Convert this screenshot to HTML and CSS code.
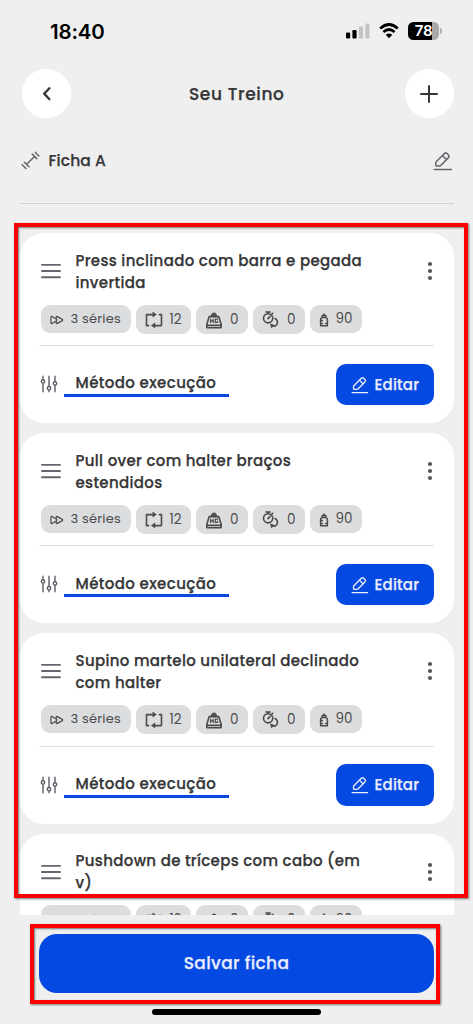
FILE: index.html
```html
<!DOCTYPE html>
<html lang="pt-BR">
<head>
<meta charset="utf-8">
<title>Seu Treino</title>
<link rel="stylesheet" href="styles.css">
</head>
<body>
<svg class="sprite" aria-hidden="true">
  <symbol id="edit" viewBox="0 0 20 20"><path d="M3.2 10.8 11.4 2.5Q12.7 1.2 14 2.5L15.5 4Q16.8 5.3 15.5 6.6L8 14.2Q7.3 14.9 6.4 14.9H3.6Q2.8 14.9 2.8 14.1V11.9Q2.8 11.2 3.2 10.8ZM9.5 4.6 13.4 8.6M1.2 18.4H18.5"/></symbol>
  <symbol id="menu" viewBox="0 0 20 16"><path d="M1 1.9H19M1 8H19M1 14.2H19"/></symbol>
  <symbol id="dots" viewBox="0 0 6 20"><circle cx="3" cy="3" r="2.1"/><circle cx="3" cy="10" r="2.1"/><circle cx="3" cy="17" r="2.1"/></symbol>
  <symbol id="series" viewBox="0 0 14 10"><path d="M1 2.2Q1 1.1 2 1.6L6.2 4Q7.6 5 6.2 6L2 8.4Q1 8.9 1 7.8ZM6.2 4V2.2Q6.2 1.1 7.2 1.6L12 4.1Q13.5 5 12 5.9L7.2 8.4Q6.2 8.9 6.2 7.8V6"/></symbol>
  <symbol id="repeat" viewBox="0 0 18 18"><path d="M3.6 14.6H1.5V3.6H8M14.4 3.6H16.5V14.6H9.5"/><path class="solid" d="m7.6.6 4.2 3-4.2 3zM10.2 11.6l-4.2 3 4.2 3z"/></symbol>
  <symbol id="weight" viewBox="0 0 18 18"><path d="M4.2 5.6H13.8L16.2 13.4V16.6H1.8V13.4ZM6.6 5.4V4.4H11.4V5.4M7.2 4A1.8 1.8 0 1 1 10.8 4M2 14.3H16"/><path class="fine" d="M5.6 8V11.6M5.6 9.8H8.2M8.2 8V11.6M12.6 8.2H10.3V11.4H12.6V10"/></symbol>
  <symbol id="rest" viewBox="0 0 18 18"><circle cx="6.1" cy="7.3" r="4.6"/><path d="M4 1H8.2M6.1 1V2.5M9.8 3.3 10.8 2.3M6 7.6 8.1 5.3M13 7.6A3.9 3.9 0 1 1 10 15"/><path class="solid" d="m8 12.6 4.6 1.3-3.3 3.4z"/></symbol>
  <symbol id="bottle" viewBox="0 0 10 14"><path d="M3.2 4.4V2.6H6.8V4.4M5 .9V2.4M3 4.6H7Q8.4 5.2 8.4 6.6V12.8H1.6V6.6Q1.6 5.2 3 4.6ZM1.8 7.4H3.4M1.8 10.4H3.4M8.2 10.4H6.8"/></symbol>
  <symbol id="sliders" viewBox="0 0 18 18"><path d="M3 1.3V4.7M3 8.1V16.7M9 1.3V11.4M9 15V16.7M15 1.3V6.6M15 10.2V16.7"/><circle cx="3" cy="6.4" r="1.7"/><circle cx="9" cy="13.2" r="1.7"/><circle cx="15" cy="8.4" r="1.7"/></symbol>
</svg>
<div class="phone">
  <header class="status">
    <span class="time">18:40</span>
    <div class="indicators">
      <svg class="signal" viewBox="0 0 25 17"><rect x="0" y="10.5" width="4.2" height="6" rx="1.2"/><rect x="6.4" y="8" width="4.2" height="8.5" rx="1.2"/><rect class="dim" x="12.9" y="4.5" width="4.2" height="12" rx="1.2"/><rect class="dim" x="19.3" y="1.5" width="4.2" height="15" rx="1.2"/></svg>
      <svg class="wifi" viewBox="0 0 20 16"><path d="M1.2 5.4Q10-2.4 18.8 5.4M4.4 8.9Q10 4.1 15.6 8.9"/><path class="wedge" d="M6.7 11.8Q10 9 13.3 11.8L10 15.2Z"/></svg>
      <span class="battery">78</span><i class="cap"></i>
    </div>
  </header>
  <nav class="topbar">
    <button class="round"><svg viewBox="0 0 20 20"><path d="M13.4 4.3 8.2 9.6 13.4 15.2"/></svg></button>
    <h1>Seu Treino</h1>
    <button class="round plus"><svg viewBox="0 0 20 20"><path d="M10 2V18M2 10H18"/></svg></button>
  </nav>
  <section class="sheet">
    <svg class="dumbbell" viewBox="0 0 20 20"><path d="m6 14 8.2-8.2M3.6 11.8l4.8 4.8M1.2 14.4l4 4M11.8 3.2l4.8 4.8M15 1.4l3.8 3.8"/></svg>
    <h2>Ficha A</h2>
    <svg class="pen"><use href="#edit"/></svg>
  </section>
  <main class="list">
    <article class="card">
      <div class="head"><svg class="menu"><use href="#menu"/></svg><h3>Press inclinado com barra e pegada<br>invertida</h3><svg class="dots"><use href="#dots"/></svg></div>
      <div class="tags"><span class="tag sets"><svg><use href="#series"/></svg><b>3 séries</b></span><span class="tag reps"><svg><use href="#repeat"/></svg><b>12</b></span><span class="tag"><svg><use href="#weight"/></svg><b>0</b></span><span class="tag"><svg><use href="#rest"/></svg><b>0</b></span><span class="tag load"><svg><use href="#bottle"/></svg><b>90</b></span></div>
      <div class="foot"><svg class="sliders"><use href="#sliders"/></svg><span class="method">Método execução</span><button class="edit"><svg><use href="#edit"/></svg><span>Editar</span></button></div>
    </article>
    <article class="card">
      <div class="head"><svg class="menu"><use href="#menu"/></svg><h3>Pull over com halter braços<br>estendidos</h3><svg class="dots"><use href="#dots"/></svg></div>
      <div class="tags"><span class="tag sets"><svg><use href="#series"/></svg><b>3 séries</b></span><span class="tag reps"><svg><use href="#repeat"/></svg><b>12</b></span><span class="tag"><svg><use href="#weight"/></svg><b>0</b></span><span class="tag"><svg><use href="#rest"/></svg><b>0</b></span><span class="tag load"><svg><use href="#bottle"/></svg><b>90</b></span></div>
      <div class="foot"><svg class="sliders"><use href="#sliders"/></svg><span class="method">Método execução</span><button class="edit"><svg><use href="#edit"/></svg><span>Editar</span></button></div>
    </article>
    <article class="card">
      <div class="head"><svg class="menu"><use href="#menu"/></svg><h3>Supino martelo unilateral declinado<br>com halter</h3><svg class="dots"><use href="#dots"/></svg></div>
      <div class="tags"><span class="tag sets"><svg><use href="#series"/></svg><b>3 séries</b></span><span class="tag reps"><svg><use href="#repeat"/></svg><b>12</b></span><span class="tag"><svg><use href="#weight"/></svg><b>0</b></span><span class="tag"><svg><use href="#rest"/></svg><b>0</b></span><span class="tag load"><svg><use href="#bottle"/></svg><b>90</b></span></div>
      <div class="foot"><svg class="sliders"><use href="#sliders"/></svg><span class="method">Método execução</span><button class="edit"><svg><use href="#edit"/></svg><span>Editar</span></button></div>
    </article>
    <article class="card">
      <div class="head"><svg class="menu"><use href="#menu"/></svg><h3>Pushdown de tríceps com cabo (em<br>v)</h3><svg class="dots"><use href="#dots"/></svg></div>
      <div class="tags"><span class="tag sets"><svg><use href="#series"/></svg><b>3 séries</b></span><span class="tag reps"><svg><use href="#repeat"/></svg><b>12</b></span><span class="tag"><svg><use href="#weight"/></svg><b>0</b></span><span class="tag"><svg><use href="#rest"/></svg><b>0</b></span><span class="tag load"><svg><use href="#bottle"/></svg><b>90</b></span></div>
    </article>
  </main>
  <footer class="bottom">
    <button class="save"><span>Salvar ficha</span></button>
    <div class="home"></div>
  </footer>
  <div class="mark mark-list"></div>
  <div class="mark mark-save"></div>
</div>
</body>
</html>
```
FILE: styles.css
```css
* { box-sizing: border-box; }
body { margin: 0; background: #efefef; font-family: Poppins, Inter, sans-serif; color: #363638; }
button { border: 0; padding: 0; font: inherit; color: inherit; }
h1, h2, h3 { margin: 0; font-weight: 500; }
h1, h2, h3, .method, .edit, .save { -webkit-text-stroke: .25px currentColor; }
svg { display: block; flex: none; fill: none; stroke: currentColor; stroke-linecap: round; stroke-linejoin: round; }
.solid { fill: currentColor; stroke: none; }
.fine { stroke-width: 1.2; }
.sprite { position: absolute; width: 0; height: 0; }
.phone { position: relative; width: 473px; height: 1024px; overflow: hidden; display: flex; flex-direction: column; }

.status { height: 69px; flex: none; padding: 20px 31px 0 50px; display: flex; justify-content: space-between; align-items: flex-start; color: #000; }
.time { font: 600 20.5px/24px Inter, sans-serif; letter-spacing: -.2px; }
.indicators { display: flex; align-items: center; padding-top: 2px; }
.signal { width: 25px; height: 17px; fill: #000; stroke: none; margin-right: 8px; }
.signal .dim { fill: #c3c3c3; }
.wifi { width: 20px; height: 16px; stroke-width: 2.7; stroke-linecap: butt; margin-right: 9px; }
.wifi .wedge { fill: #000; stroke: none; }
.battery { width: 31px; height: 17.5px; border-radius: 5.5px; background: linear-gradient(90deg, #000 79%, #a8a8a8 79%); color: #fff; font: 600 15px/18px Inter, sans-serif; text-align: center; letter-spacing: -.2px; }
.cap { width: 2px; height: 6px; margin-left: 1px; border-radius: 0 2px 2px 0; background: #b1b1b1; }

.topbar { height: 49px; flex: none; padding: 0 19.5px 0 22px; display: flex; align-items: center; justify-content: space-between; }
.topbar h1 { font-size: 17px; letter-spacing: .65px; line-height: 24px; padding: 1px 2px 0 0; }
.round { width: 48.5px; height: 48.5px; border-radius: 50%; background: #fff; display: grid; place-items: center; }
.round svg { width: 20px; height: 20px; stroke-width: 2.3; }
.round.plus svg { stroke-width: 2; }

.sheet { height: 86px; flex: none; margin: 0 19.5px; border-bottom: 1px solid #d1d1d1; display: flex; align-items: center; padding: 0 1px 0 1px; }
.sheet h2 { font-size: 15.5px; letter-spacing: .1px; margin-left: 9px; flex: 1; }
.dumbbell { width: 19px; height: 19px; stroke-width: 1.6; color: #65656c; }
.pen { width: 20px; height: 20px; stroke-width: 1.5; color: #65656c; }

.list { height: 711px; flex: none; margin: 0 19.5px; padding-top: 29px; overflow: hidden; display: flex; flex-direction: column; gap: 10px; }
.card { height: 190.2px; flex: none; border-radius: 24px; background: #fff; padding: 16px 20px 0 19.5px; display: flex; flex-direction: column; }
.head { height: 55.5px; flex: none; display: flex; padding: 0 1px 0 2px; }
.head h3 { flex: 1; margin: .7px 0 0 14.5px; font-size: 15px; line-height: 22px; white-space: nowrap; letter-spacing: .33px; }
.menu { width: 20px; height: 16px; margin-top: 14px; stroke-width: 1.9; color: #65656e; }
.dots { width: 6px; height: 20px; margin-top: 12px; fill: #55555a; stroke: none; }

.tags { height: 41.8px; flex: none; display: flex; gap: 5px; align-items: flex-start; padding-left: 2px; border-bottom: 1.4px solid #e0e0e1; }
.tag { width: 52px; height: 29px; border-radius: 9px; background: #dcdddf; color: #4b4b4d; display: flex; align-items: center; justify-content: space-between; padding: 0 9.5px 0 9px; }
.tag b { font-weight: 400; font-size: 13.5px; line-height: 20px; padding-top: 1px; }
.tag svg { width: 18px; height: 18px; stroke-width: 1.6; margin-top: 2px; }
.sets { width: 90px; height: 28px; padding-right: 10px; }
.sets svg { width: 14px; height: 10px; stroke-width: 1.2; }
.sets b { font-size: 13px; letter-spacing: .2px; }
.reps { width: 55px; }
.load { height: 28px; }
.load svg { width: 10px; height: 14px; stroke-width: 1.5; }

.foot { display: flex; align-items: flex-start; padding-top: 17.5px; }
.sliders { width: 18px; height: 18px; margin: 11.5px 5.5px 0 1px; stroke-width: 1.4; color: #5d5d65; }
.method { width: 165.5px; height: 33.4px; padding: 8.7px 0 0 12px; border-bottom: 3px solid #0a4ae2; font-size: 15px; font-weight: 500; line-height: 22px; white-space: nowrap; letter-spacing: .4px; }
.edit { width: 98px; height: 41.5px; margin-left: auto; border-radius: 10px; background: #0449e1; color: #e9edff; display: flex; align-items: center; padding-left: 15px; gap: 6px; font-size: 15px; font-weight: 500; letter-spacing: .2px; }
.edit svg { width: 18px; height: 18px; stroke-width: 1.5; }

.bottom { flex: 1; padding: 19px 39px 0; display: flex; flex-direction: column; align-items: center; }
.save { width: 395.5px; height: 58.5px; flex: none; border-radius: 18px; background: #0449e1; color: #e9edff; font-size: 17px; font-weight: 500; letter-spacing: .35px; }
.home { width: 169px; height: 6px; margin-top: 16px; border-radius: 3px; background: #000; }

.mark { position: absolute; border: 4px solid #fb0000; pointer-events: none; box-shadow: 1px 1px 2px #777, inset 1px 1px 2px #777; }
.mark-list { left: 14px; top: 223px; width: 454px; height: 675px; }
.mark-save { left: 30px; top: 924px; width: 410px; height: 80px; }
```
